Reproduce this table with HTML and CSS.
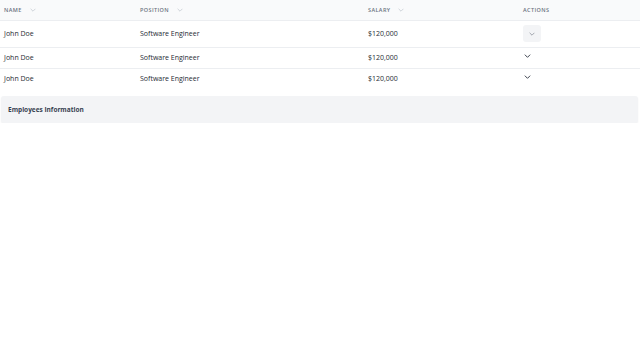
FILE: index.html
```html
<!DOCTYPE html>
<html>
<head>
<meta charset="utf-8">
<link rel="stylesheet" href="styles.css">
</head>
<body>
<div class="page">
  <table class="grid">
    <thead>
      <tr>
        <th class="c-name"><span class="hd">Name <svg class="sort" viewBox="0 0 10 6"><path d="M1 1l4 4 4-4" fill="none" stroke="currentColor" stroke-width="1"/></svg></span></th>
        <th class="c-pos"><span class="hd">Position <svg class="sort" viewBox="0 0 10 6"><path d="M1 1l4 4 4-4" fill="none" stroke="currentColor" stroke-width="1"/></svg></span></th>
        <th class="c-sal"><span class="hd">Salary <svg class="sort" viewBox="0 0 10 6"><path d="M1 1l4 4 4-4" fill="none" stroke="currentColor" stroke-width="1"/></svg></span></th>
        <th class="c-act">Actions</th>
      </tr>
    </thead>
    <tbody>
      <tr class="first">
        <td>John Doe</td>
        <td>Software Engineer</td>
        <td>$120,000</td>
        <td><span class="btn"><svg class="chev" viewBox="0 0 10 6"><path d="M1 1l4 4 4-4" fill="none" stroke="currentColor" stroke-width="1"/></svg></span></td>
      </tr>
      <tr>
        <td>John Doe</td>
        <td>Software Engineer</td>
        <td>$120,000</td>
        <td class="act-plain"><svg class="chev dark" viewBox="0 0 10 6"><path d="M1 1l4 4 4-4" fill="none" stroke="currentColor" stroke-width="1.2"/></svg></td>
      </tr>
      <tr class="last">
        <td>John Doe</td>
        <td>Software Engineer</td>
        <td>$120,000</td>
        <td class="act-plain"><svg class="chev dark" viewBox="0 0 10 6"><path d="M1 1l4 4 4-4" fill="none" stroke="currentColor" stroke-width="1.2"/></svg></td>
      </tr>
    </tbody>
  </table>
  <div class="footer">Employees Information</div>
</div>
</body>
</html>
```
FILE: styles.css
```css
* { box-sizing: border-box; }
html, body { margin: 0; padding: 0; background: #ffffff; }
body { font-family: "Open Sans", "Noto Sans", sans-serif; color: #1f2937; }
.page { width: 640px; }
.grid { width: 640px; border-collapse: collapse; table-layout: fixed; }
.grid th {
  height: 20px;
  background: #f9fafb;
  border-bottom: 1px solid #eceef1;
  text-align: left;
  font-size: 5.5px;
  font-weight: 600;
  letter-spacing: 0.4px;
  text-transform: uppercase;
  color: #6b7280;
  padding: 0 0 0 4px;
  vertical-align: middle;
}
.c-name { width: 136px; }
.c-pos { width: 228px; }
.c-sal { width: 155px; }
.c-act { width: 121px; }
.hd { display: inline-flex; align-items: center; gap: 8px; }
.sort { width: 6px; height: 4px; color: #b6bcc6; }
.grid td {
  height: 21px;
  padding: 0 0 0 4px;
  font-size: 7px;
  color: #262b33;
  border-bottom: 1px solid #eceef1;
  vertical-align: middle;
}
.grid tr.first td { height: 27px; }
.grid tr.last td { border-bottom: none; }
.btn {
  display: inline-flex;
  width: 18px;
  height: 17px;
  align-items: center;
  justify-content: center;
  background: #f3f4f6;
  border-radius: 3px;
  color: #6b7280;
}
.chev { width: 6px; height: 4px; display: block; }
.chev.dark { color: #111827; width: 7px; height: 4px; }
.act-plain { vertical-align: top !important; padding-top: 6px !important; padding-left: 5px !important; }
.footer {
  margin: 7px 2px 0 1px;
  height: 27px;
  background: #f3f4f6;
  border-radius: 3px;
  box-shadow: 0 1px 2px rgba(0,0,0,0.06);
  padding: 0 7px;
  display: flex;
  align-items: center;
  font-size: 6.5px;
  font-weight: 700;
  color: #374151;
}
```
